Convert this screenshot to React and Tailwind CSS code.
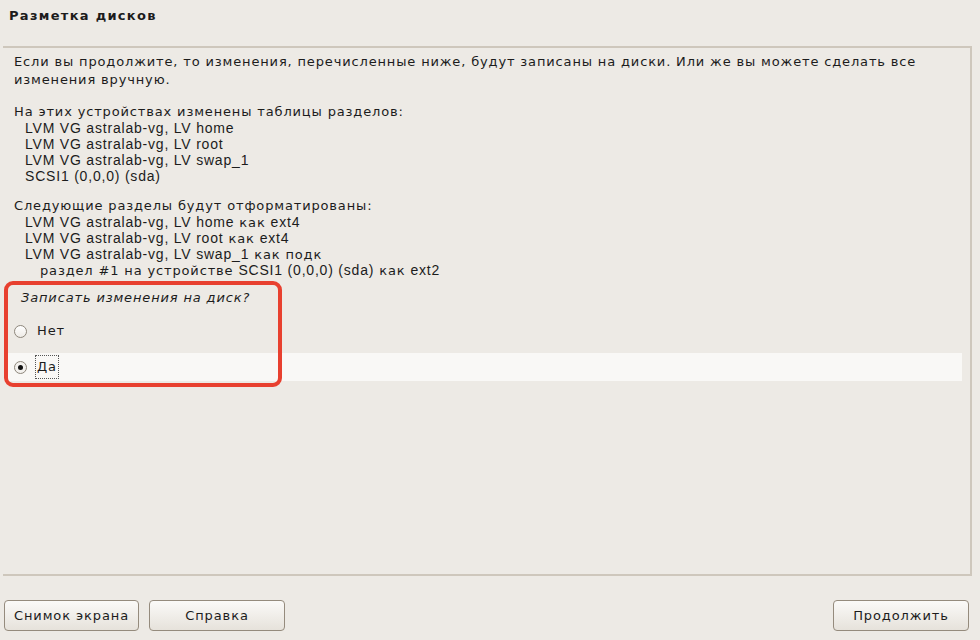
import React from 'react';

const dv = { fontFamily: '"DejaVu Sans", sans-serif' };
const lib = { fontFamily: '"Liberation Sans", Arial, sans-serif' };

// Latin parts of the installer text are rendered with a narrower face
function L({ children }) {
  return <span className="text-[14px] tracking-[0.8px]" style={lib}>{children}</span>;
}

function Line({ children, className = '' }) {
  return <div className={'h-[16px] leading-[16px] whitespace-nowrap ' + className}>{children}</div>;
}

function Button({ children, className = '' }) {
  return (
    <div className={'h-[31px] flex items-center justify-center rounded-[4px] border border-[#958b7d] bg-gradient-to-b from-[#fbfaf8] to-[#e6e2db] text-[13px] tracking-[0.9px] text-[#1c1c1c] ' + className}>
      {children}
    </div>
  );
}

export default function App() {
  return (
    <div className="w-[980px] h-[640px] bg-[#edeae5] flex flex-col text-[#1c1c1c] text-[13px] tracking-[0.85px] relative overflow-hidden" style={dv}>
      <div className="h-[46px] pl-[9px] pt-[6px] font-bold text-[13px] tracking-[1.3px]">Разметка дисков</div>

      <div className="h-[530px] ml-[3px] w-[969px] border-t-2 border-r-2 border-b-2 border-[#cec7bc] pt-[5px] flex flex-col">
        <div className="pl-[11px]">
          <div className="h-[18px] leading-[18px] whitespace-nowrap">
            Если вы продолжите, то изменения, перечисленные ниже, будут записаны на диски. Или же вы можете сделать все
          </div>
          <div className="h-[18px] leading-[18px] whitespace-nowrap">изменения вручную.</div>

          <Line className="mt-[15px]">На этих устройствах изменены таблицы разделов:</Line>
          <Line className="pl-[11px]"><L>LVM VG astralab-vg, LV home</L></Line>
          <Line className="pl-[11px]"><L>LVM VG astralab-vg, LV root</L></Line>
          <Line className="pl-[11px]"><L>LVM VG astralab-vg, LV swap_1</L></Line>
          <Line className="pl-[11px]"><L>SCSI1 (0,0,0) (sda)</L></Line>

          <Line className="mt-[14px]">Следующие разделы будут отформатированы:</Line>
          <Line className="pl-[11px]"><L>LVM VG astralab-vg, LV home</L> как <L>ext4</L></Line>
          <Line className="pl-[11px]"><L>LVM VG astralab-vg, LV root</L> как <L>ext4</L></Line>
          <Line className="pl-[11px]"><L>LVM VG astralab-vg, LV swap_1</L> как подк</Line>
          <Line className="pl-[26px]">раздел #1 на устройстве <L>SCSI1 (0,0,0) (sda)</L> как <L>ext2</L></Line>
        </div>

        <div className="mt-[12px] pl-[18px] h-[16px] leading-[16px] italic whitespace-nowrap">Записать изменения на диск?</div>

        <div className="mt-[11px] h-[28px] flex items-center pl-[10px] ml-[1px] mr-[8px]">
          <span className="w-[13px] h-[13px] rounded-full border border-[#8e877c] bg-gradient-to-b from-[#ffffff] to-[#eeebe6]" />
          <span className="ml-[10px] text-[13px]">Нет</span>
        </div>
        <div className="mt-[8px] h-[28px] flex items-center pl-[10px] ml-[1px] mr-[8px] bg-[#f9f8f6]">
          <span className="w-[13px] h-[13px] rounded-full border border-[#8e877c] bg-[#f3f1ee] flex items-center justify-center">
            <span className="w-[5px] h-[5px] rounded-full bg-[#111]" />
          </span>
          <span className="ml-[8px] px-[1px] h-[24px] leading-[22px] border border-dotted border-[#555]">Да</span>
        </div>
      </div>

      <div className="flex-1 flex items-start pt-[24px] pl-[4px] pr-[11px]">
        <Button className="w-[135px]">Снимок экрана</Button>
        <Button className="w-[136px] ml-[10px]">Справка</Button>
        <Button className="w-[136px] ml-auto">Продолжить</Button>
      </div>

      <div className="absolute left-[4px] top-[281px] w-[278px] h-[106px] border-[4px] border-[#e8402f] rounded-[9px] pointer-events-none" />
    </div>
  );
}
